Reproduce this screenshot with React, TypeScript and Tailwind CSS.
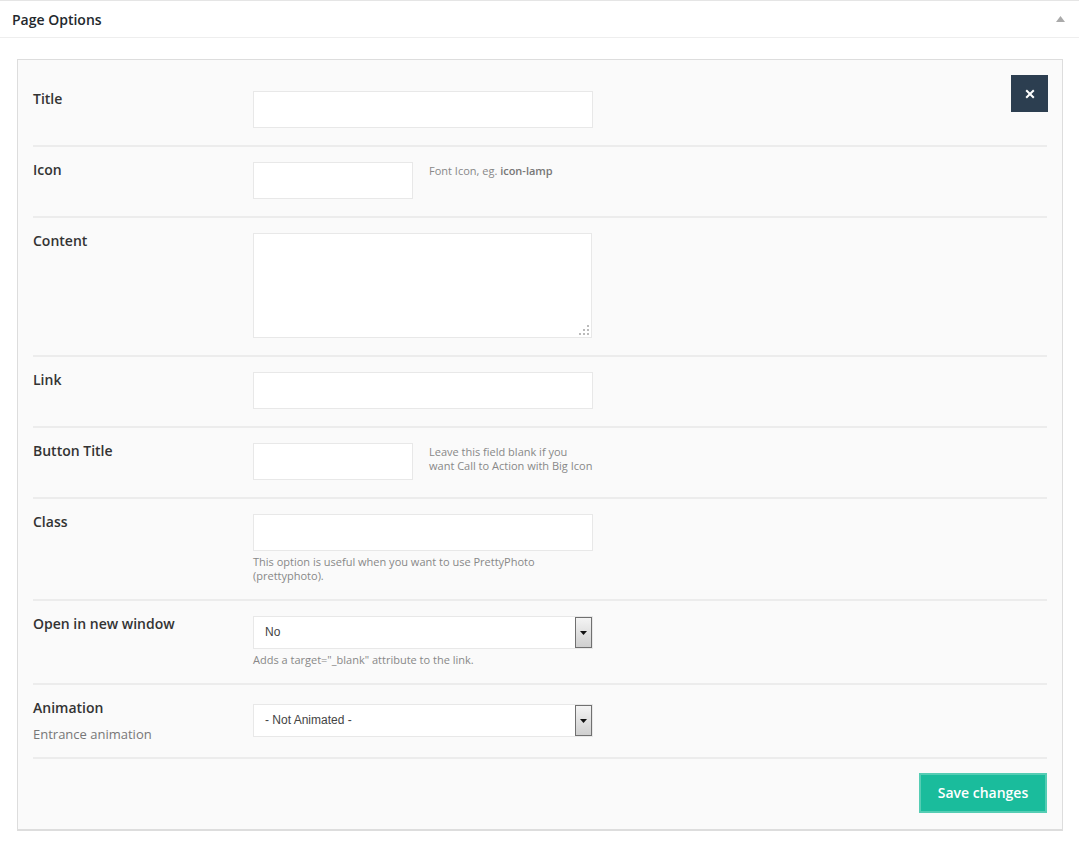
import React from 'react';

const font = { fontFamily: '"Open Sans", "Liberation Sans", sans-serif' };

function Label({ title, sub }: { title: string; sub?: string }) {
  return (
    <div className="w-[220px] shrink-0">
      <div className="text-[14px] leading-[16px] font-semibold text-[#333]">{title}</div>
      {sub && <div className="mt-[11px] text-[13px] leading-[14px] text-[#777]">{sub}</div>}
    </div>
  );
}

function Input({ small }: { small?: boolean }) {
  return (
    <div
      className={
        'h-[37px] bg-white border border-[#e8e8e8] ' + (small ? 'w-[160px]' : 'w-[340px]')
      }
    />
  );
}

function Select({ value }: { value: string }) {
  return (
    <div className="relative h-[33px] w-[340px] bg-white border border-[#e8e8e8] flex items-center">
      <span
        className="pl-[11px] pb-[2px] text-[12px] text-[#444]"
        style={{ fontFamily: '"Liberation Sans", Arial, sans-serif' }}
      >
        {value}
      </span>
      <div className="absolute right-0 top-0 h-[31px] w-[17px] border border-[#707070] bg-gradient-to-b from-[#f4f4f4] to-[#cfcfcf] flex items-center justify-center">
        <svg width="7" height="4" viewBox="0 0 7 4">
          <path d="M0 0h7L3.5 4z" fill="#111" />
        </svg>
      </div>
    </div>
  );
}

function Help({ children, className = '' }: { children: React.ReactNode; className?: string }) {
  return <div className={'text-[11px] leading-[14px] text-[#888] ' + className}>{children}</div>;
}

function Row({ children, pb = 'pb-[17px]' }: { children: React.ReactNode; pb?: string }) {
  return <div className={'flex border-b-2 border-[#ececec] pt-[15px] ' + pb}>{children}</div>;
}

export default function App() {
  return (
    <div className="w-[1079px] h-[863px] bg-white" style={font}>
      <div className="border-t border-[#e5e5e5]">
        <div className="h-[37px] flex items-center justify-between border-b border-[#eeeeee] pl-[12px] pr-[14px]">
          <span className="text-[14px] font-semibold text-[#23282d]">Page Options</span>
          <svg width="9" height="6" viewBox="0 0 9 6">
            <path d="M0 6L4.5 0L9 6z" fill="#aaa" />
          </svg>
        </div>
      </div>

      <div className="pl-[17px] pt-[21px]">
        <div className="relative w-[1046px] bg-[#fafafa] border border-[#dddddd] border-b-2 px-[15px] pt-[16px] pb-[15px]">
          <button className="absolute right-[14px] top-[15px] w-[37px] h-[37px] bg-[#2c3e50] flex items-center justify-center">
            <svg width="10" height="10" viewBox="0 0 10 10">
              <path d="M1.2 1.2l7.6 7.6M8.8 1.2L1.2 8.8" stroke="#fff" strokeWidth="2" />
            </svg>
          </button>

          <Row>
            <Label title="Title" />
            <Input />
          </Row>

          <Row>
            <Label title="Icon" />
            <Input small />
            <Help className="ml-[16px] mt-[2px]">
              Font Icon, eg. <b className="font-semibold text-[#777]">icon-lamp</b>
            </Help>
          </Row>

          <Row>
            <Label title="Content" />
            <div className="relative h-[105px] w-[339px] bg-white border border-[#e8e8e8]">
              <svg className="absolute right-[2px] bottom-[2px]" width="10" height="10" viewBox="0 0 10 10">
                <rect x="8" y="0" width="2" height="2" fill="#bbb" />
                <rect x="4" y="4" width="2" height="2" fill="#bbb" />
                <rect x="8" y="4" width="2" height="2" fill="#bbb" />
                <rect x="0" y="8" width="2" height="2" fill="#bbb" />
                <rect x="4" y="8" width="2" height="2" fill="#bbb" />
                <rect x="8" y="8" width="2" height="2" fill="#bbb" />
              </svg>
            </div>
          </Row>

          <Row>
            <Label title="Link" />
            <Input />
          </Row>

          <Row>
            <Label title="Button Title" />
            <Input small />
            <Help className="ml-[16px] mt-[2px]">
              Leave this field blank if you
              <br />
              want Call to Action with Big Icon
            </Help>
          </Row>

          <Row pb="pb-[16px]">
            <Label title="Class" />
            <div>
              <Input />
              <Help className="mt-[4px]">
                This option is useful when you want to use PrettyPhoto
                <br />
                (prettyphoto).
              </Help>
            </div>
          </Row>

          <Row pb="pb-[16px]">
            <Label title="Open in new window" />
            <div>
              <Select value="No" />
              <Help className="mt-[4px]">Adds a target="_blank" attribute to the link.</Help>
            </div>
          </Row>

          <Row pb="pb-[16px]">
            <Label title="Animation" sub="Entrance animation" />
            <div className="mt-[4px]">
              <Select value="- Not Animated -" />
            </div>
          </Row>

          <div className="flex justify-end pt-[14px] pb-[1px]">
            <button className="h-[40px] w-[128px] bg-[#1abc9c] border-2 border-[#55cdb4] text-white text-[14px] font-semibold pb-[2px]">
              Save changes
            </button>
          </div>
        </div>
      </div>
    </div>
  );
}
